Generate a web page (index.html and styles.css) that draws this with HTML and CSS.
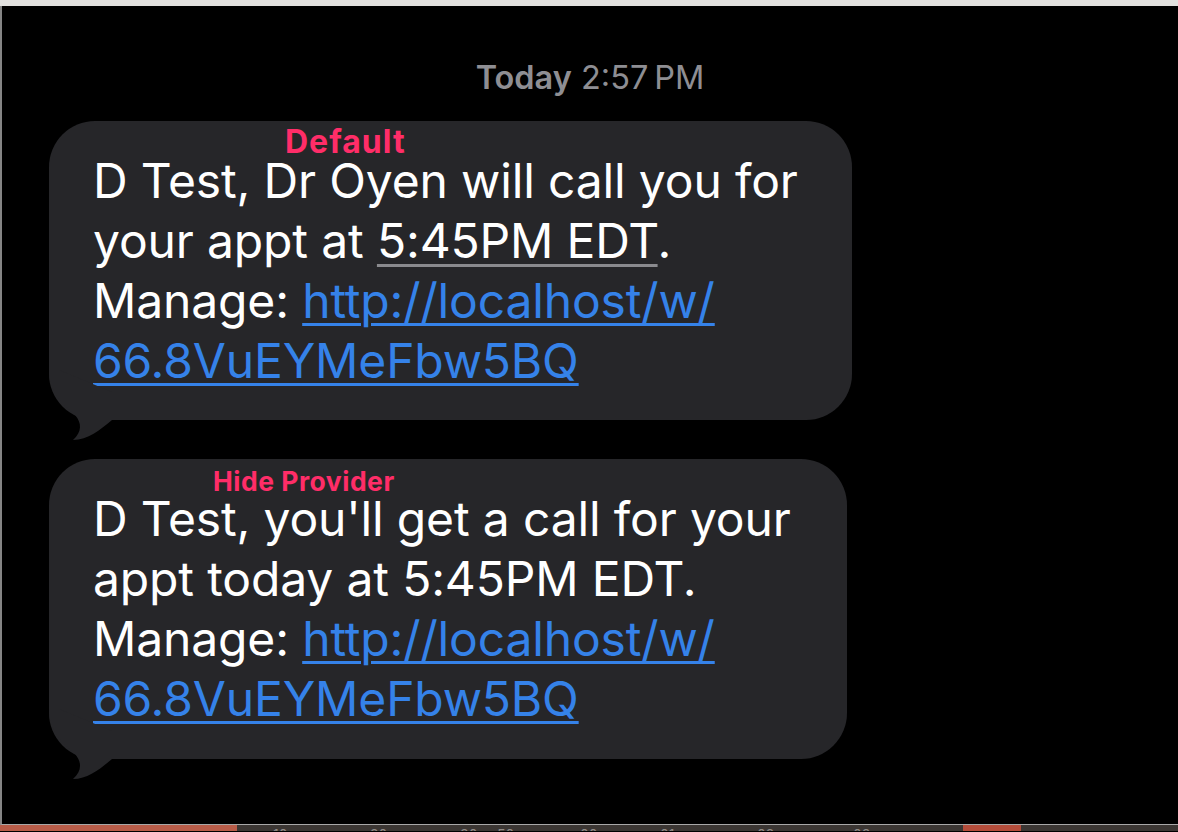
FILE: index.html
```html
<!DOCTYPE html>
<html lang="en">
<head>
    <meta charset="UTF-8">
    <meta name="viewport" content="width=device-width, initial-scale=1.0">
    <title>Messages</title>
    <link rel="stylesheet" href="styles.css">
</head>
<body>

<div class="topbar"></div>

<div class="thread">

    <!-- Timestamp -->
    <p class="stamp"><strong>Today</strong> 2:57&#8201;PM</p>

    <!-- Default template -->
    <div class="bubble bubble-default">
        <span class="tag tag-default">Default</span>
        <p class="msg">D Test, Dr Oyen will call you for<br>your appt at <span class="detected">5:45PM EDT</span>.<br>Manage: <a href="#">http://localhost/w/<br>66.8VuEYMeFbw5BQ</a></p>
        <svg class="tail" width="64" height="78" viewBox="0 0 64 78">
            <path d="M0,8 C0,33 16,43 26,53 C33,61 33,70 24,78 C39,78 51,68 63,58 L63,30 L10,8 Z" fill="#262629"/>
        </svg>
    </div>

    <!-- Hide provider template -->
    <div class="bubble bubble-hide">
        <span class="tag tag-hide">Hide Provider</span>
        <p class="msg">D Test, you'll get a call for your<br>appt today at 5:45PM EDT.<br>Manage: <a href="#">http://localhost/w/<br>66.8VuEYMeFbw5BQ</a></p>
        <svg class="tail" width="64" height="78" viewBox="0 0 64 78">
            <path d="M0,8 C0,33 16,43 26,53 C33,61 33,70 24,78 C39,78 51,68 63,58 L63,30 L10,8 Z" fill="#262629"/>
        </svg>
    </div>

</div>

<div class="dock">
    <div class="dock-seg seg-red"></div>
    <div class="dock-seg seg-dark">
        <span>10</span><span>20</span><span>30</span><span>50</span><span>00</span><span>01</span><span>02</span><span>03</span>
    </div>
    <div class="dock-seg seg-red2"></div>
    <div class="dock-seg seg-dark2"></div>
</div>

</body>
</html>
```

FILE: styles.css
```css
html, body {
    margin: 0;
    padding: 0;
    background-color: #000;
    height: 832px;
    overflow: hidden;
}

body {
    font-family: 'Inter', 'Noto Sans', sans-serif;
    color: #fff;
}

.topbar {
    height: 6px;
    background-color: #e2e1df;
}

.thread {
    height: 819px;
    border-left: 2px solid #858585;
    border-bottom: 1px solid #a8a8a8;
    padding: 52px 0 0 47px;
    box-sizing: border-box;
}

.stamp {
    margin: 0;
    padding-right: 47px;
    text-align: center;
    font-size: 32.5px;
    line-height: 40px;
    color: #8e8e93;
    font-weight: 400;
}

.stamp strong {
    font-weight: 600;
}

.bubble {
    position: relative;
    background-color: #262629;
    border-radius: 46px;
    padding: 30px 0 0 44px;
    box-sizing: border-box;
    height: 299px;
}

.bubble-default {
    margin-top: 23px;
    width: 803px;
}

.bubble-hide {
    margin-top: 39px;
    width: 798px;
    height: 300px;
}

.msg {
    margin: 0;
    font-size: 48px;
    line-height: 60px;
    letter-spacing: -0.15px;
    white-space: nowrap;
}

.msg a {
    color: #3582e9;
    text-decoration: underline;
    text-decoration-thickness: 3px;
    text-underline-offset: 5px;
}

.detected {
    text-decoration: underline;
    text-decoration-color: #8a8a8e;
    text-decoration-thickness: 3px;
    text-underline-offset: 6px;
}

.tag {
    position: absolute;
    color: #ff2d68;
    font-weight: 700;
    line-height: 1;
}

.tag-default {
    left: 236px;
    top: 5px;
    font-size: 32px;
    letter-spacing: 1px;
}

.tag-hide {
    left: 164px;
    top: 9px;
    font-size: 26.5px;
    letter-spacing: 0.5px;
}

.tail {
    position: absolute;
    left: 0;
    bottom: -20px;
}

.dock {
    display: flex;
    height: 6px;
    overflow: hidden;
}

.dock-seg {
    height: 6px;
}

.seg-red {
    width: 237px;
    background-color: #b85c48;
}

.seg-dark {
    width: 726px;
    background-color: #3b3633;
    display: grid;
    grid-template-columns: 97px 90px 37px 83px 80px 97px 96px auto;
    padding: 3px 0 0 36px;
    box-sizing: border-box;
    font-size: 14px;
    line-height: 1;
    color: #8f8a86;
}

.seg-red2 {
    width: 58px;
    background-color: #b44c3a;
}

.seg-dark2 {
    flex: 1;
    background-color: #3b3633;
}
```
